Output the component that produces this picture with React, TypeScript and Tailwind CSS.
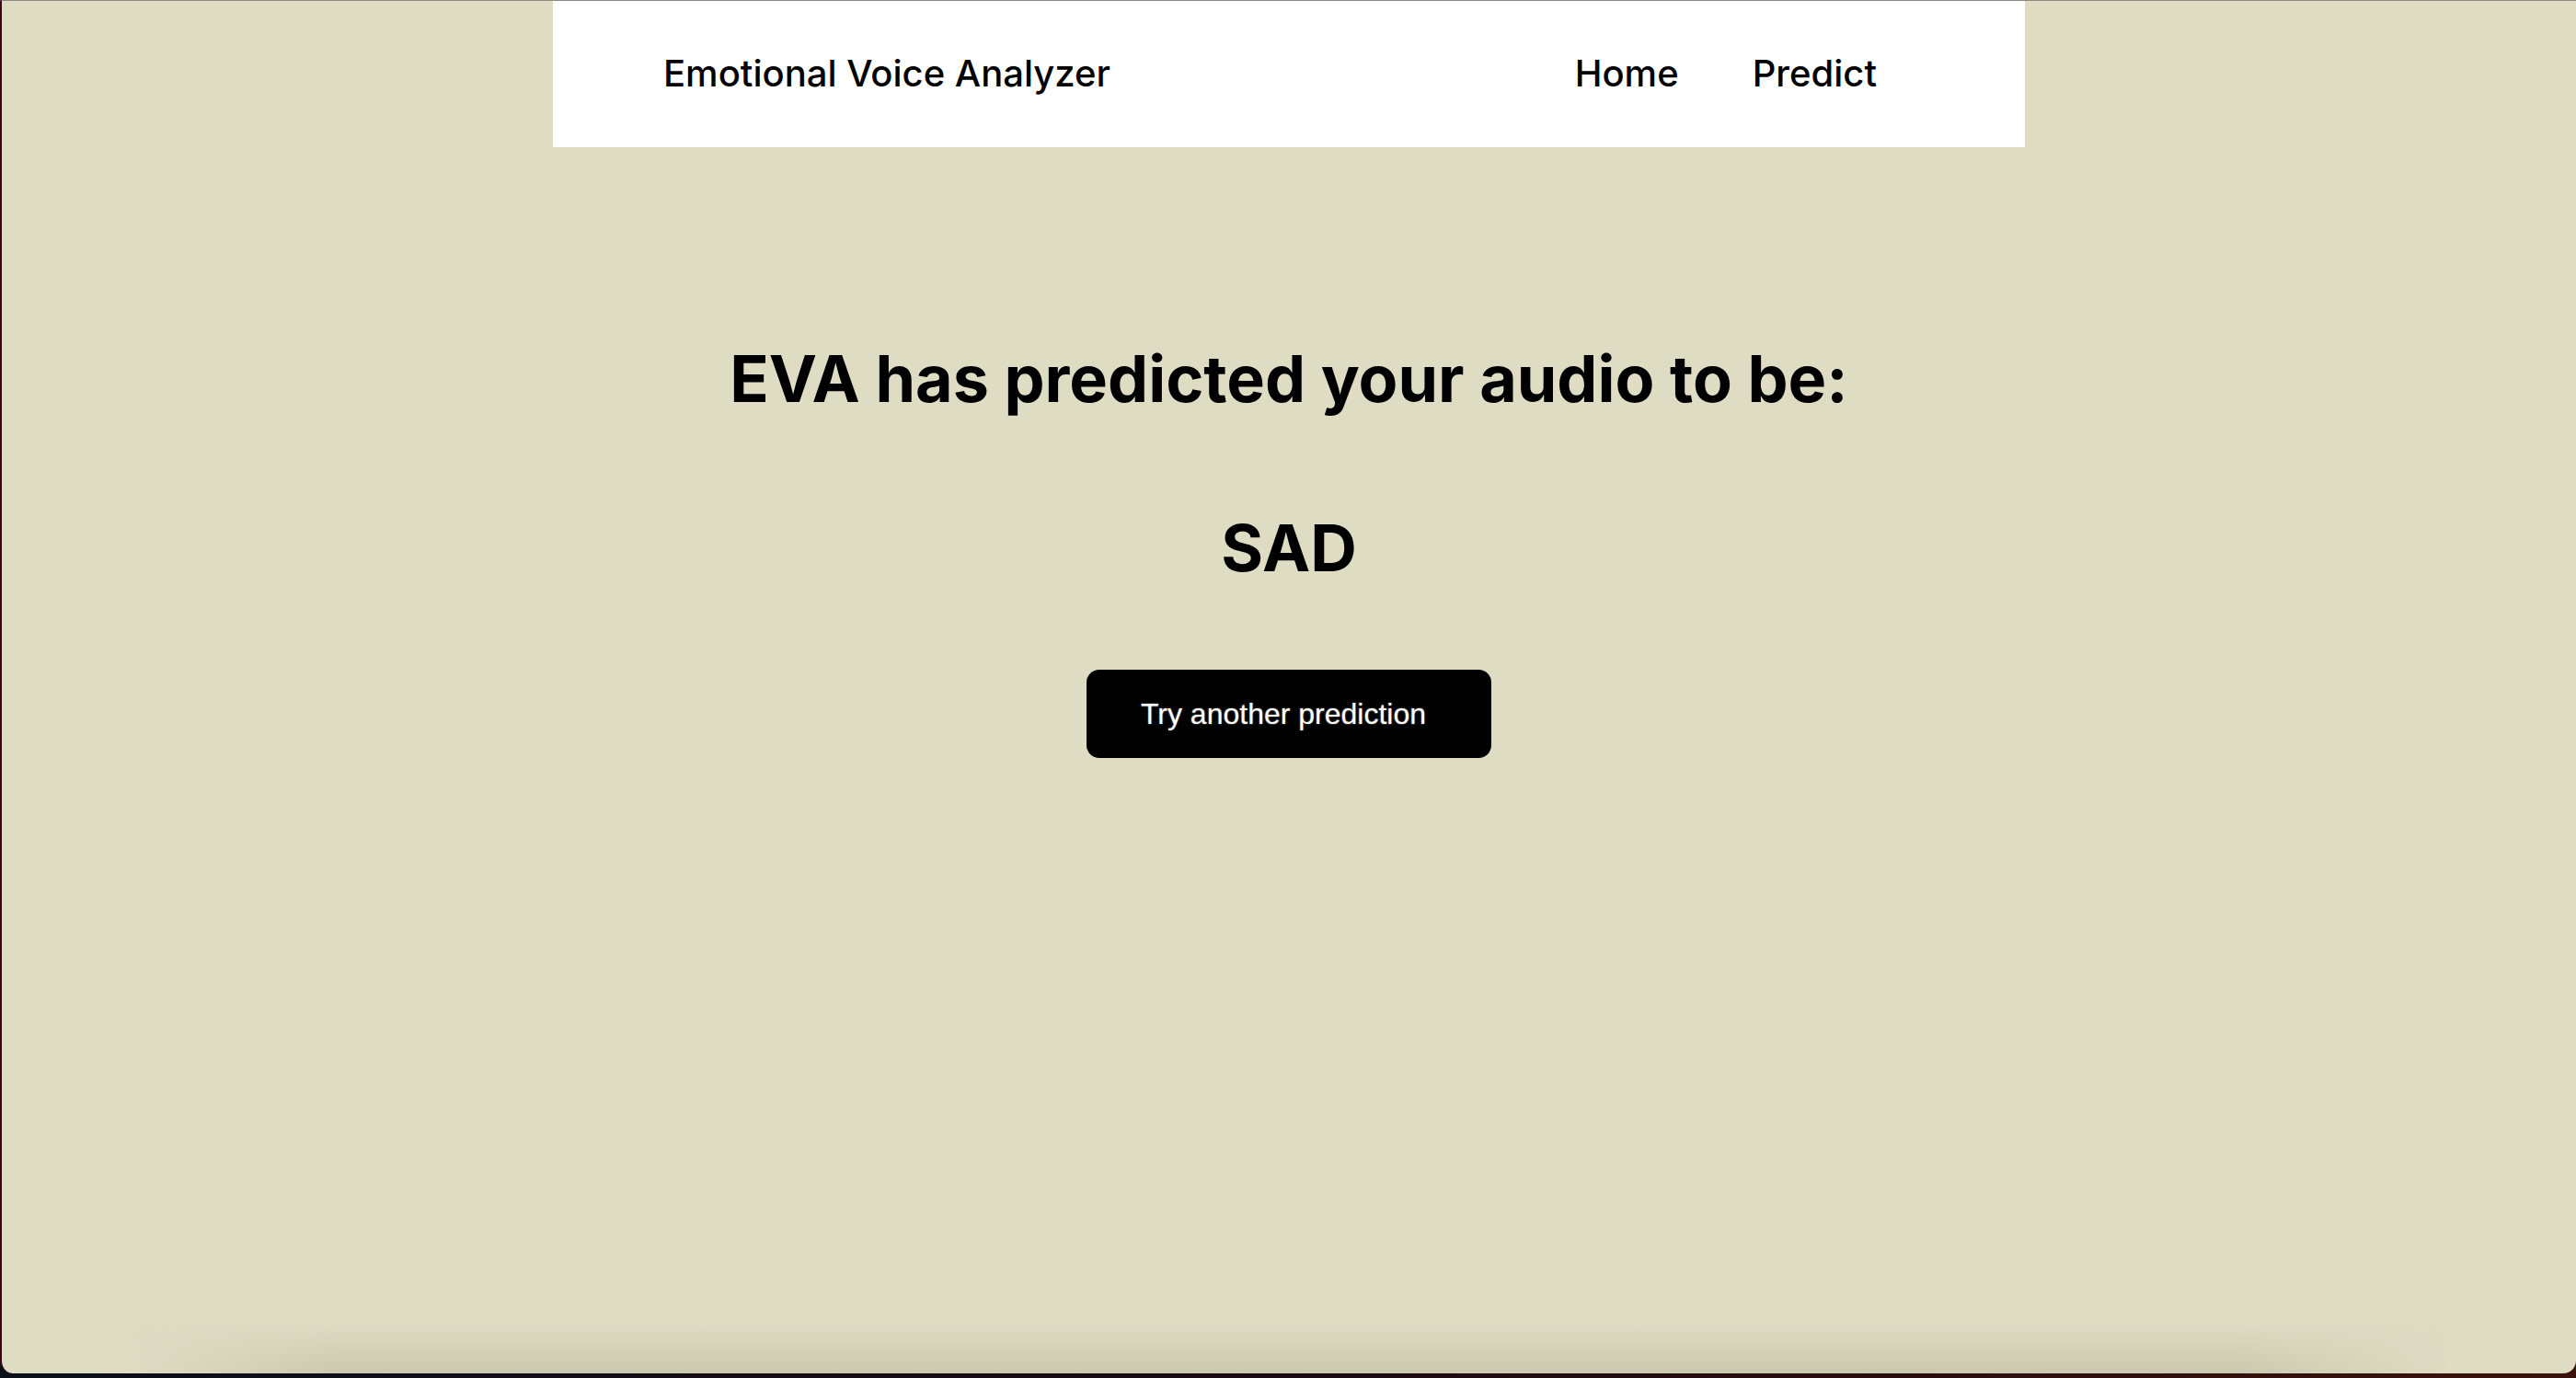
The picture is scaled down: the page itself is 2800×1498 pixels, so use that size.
const inter = "font-['Inter','Noto_Sans',sans-serif]";

function Header() {
    return (
        <header className={`mx-auto flex h-[159px] w-[1600px] shrink-0 items-center justify-between bg-white pb-[2px] pl-[120px] pr-[161px] text-[40px] font-medium text-black ${inter}`}>
            <span>Emotional Voice Analyzer</span>
            <nav className="flex gap-[80px]">
                <a href="#">Home</a>
                <a href="#">Predict</a>
            </nav>
        </header>
    );
}

export default function App() {
    return (
        <div className="h-[1498px] w-full overflow-hidden bg-[linear-gradient(to_right,#0a0f18,#1a0a12_50%,#3a120c)]">
            <div className="flex h-[1493px] flex-col overflow-hidden rounded-b-[14px] border-l-2 border-t border-l-[#3a0a14] border-t-[#8a8a80] bg-[#dfdcc4]">
                <Header />
                <main className={`flex flex-1 flex-col items-center text-black ${inter}`}>
                    <h1 className="mt-[217px] text-[70px] font-bold leading-none">EVA has predicted your audio to be:</h1>
                    <h2 className="mt-[114px] text-[70px] font-bold leading-none">SAD</h2>
                    <button className="mt-[97px] flex h-[96px] w-[440px] items-center justify-center rounded-[14px] bg-black pr-[12px] font-['Liberation_Sans',Arial,sans-serif] text-[32px] text-white [text-shadow:0_0_2px_rgba(255,255,255,0.5)]">
                        Try another prediction
                    </button>
                </main>
                <div className="h-[55px] shrink-0 bg-[linear-gradient(to_bottom,transparent,#cac8ae)] [mask-image:linear-gradient(to_right,transparent_5%,black_13%,black_87%,transparent_95%)]" />
            </div>
        </div>
    );
}
